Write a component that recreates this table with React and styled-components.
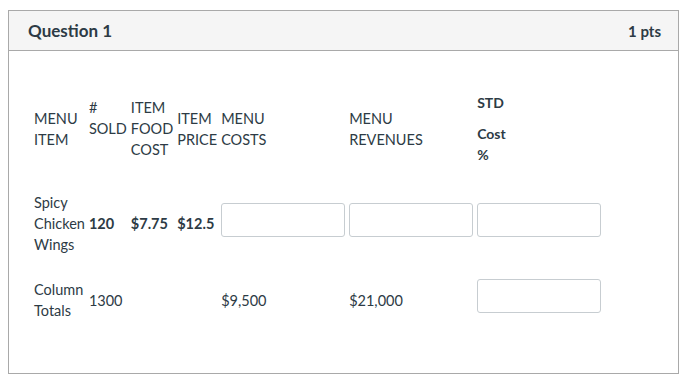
import React from 'react';
import styled, { createGlobalStyle } from 'styled-components';

const GlobalStyle = createGlobalStyle`
  body {
    margin: 0;
    background: #fff;
    font-family: Lato, "Open Sans", sans-serif;
    color: #2d3b45;
  }
`;

const Page = styled.div`
  padding: 10px 1px 4px 8px;
`;

const Card = styled.section`
  border: 1px solid #a9a9a9;
  background: #fff;
`;

const Header = styled.header`
  display: flex;
  align-items: center;
  justify-content: space-between;
  height: 39px;
  padding: 0 17px 0 19px;
  background: #f5f5f5;
  border-bottom: 1px solid #a9a9a9;
`;

const Title = styled.h2`
  margin: 0;
  font-size: 17px;
  font-weight: 700;
`;

const Points = styled.span`
  font-size: 15px;
  font-weight: 700;
`;

const Body = styled.div`
  padding: 29px 24px 40px 23px;
`;

const Table = styled.table`
  border-collapse: collapse;
  font-size: 14.5px;
  line-height: 21px;
`;

const Cell = styled.td`
  padding: ${props => (props.$head ? '12px 2px 15px' : '12px 2px')};
  vertical-align: middle;
  font-weight: ${props => (props.$bold ? 700 : 400)};
`;

const Note = styled.p`
  margin: 0;
  font-size: 14px;
  font-weight: 700;
  & + & {
    margin-top: 10px;
  }
`;

const Field = styled.input`
  display: block;
  width: 124px;
  height: 34px;
  box-sizing: border-box;
  margin: 0 0 8px;
  border: 1px solid #c7cdd1;
  border-radius: 3px;
  background: #fff;
  font: inherit;
`;

const App = () => {
  return (
    <>
      <GlobalStyle />
      <Page>
        <Card>
          <Header>
            <Title>Question 1</Title>
            <Points>1 pts</Points>
          </Header>
          <Body>
            <Table>
              <tbody>
                <tr>
                  <Cell $head>MENU<br />ITEM</Cell>
                  <Cell $head>#<br />SOLD<br />&nbsp;</Cell>
                  <Cell $head>ITEM<br />FOOD<br />COST</Cell>
                  <Cell $head>ITEM<br />PRICE</Cell>
                  <Cell $head>MENU<br />COSTS</Cell>
                  <Cell $head>MENU<br />REVENUES</Cell>
                  <Cell $head>
                    <Note>STD</Note>
                    <Note>Cost<br />%</Note>
                  </Cell>
                </tr>
                <tr>
                  <Cell>Spicy<br />Chicken<br />Wings</Cell>
                  <Cell $bold>120</Cell>
                  <Cell $bold>$7.75</Cell>
                  <Cell $bold>$12.5</Cell>
                  <Cell><Field type="text" /></Cell>
                  <Cell><Field type="text" /></Cell>
                  <Cell><Field type="text" /></Cell>
                </tr>
                <tr>
                  <Cell>Column<br />Totals</Cell>
                  <Cell>1300</Cell>
                  <Cell />
                  <Cell />
                  <Cell>$9,500</Cell>
                  <Cell>$21,000</Cell>
                  <Cell><Field type="text" /></Cell>
                </tr>
              </tbody>
            </Table>
          </Body>
        </Card>
      </Page>
    </>
  );
};

export default App;
